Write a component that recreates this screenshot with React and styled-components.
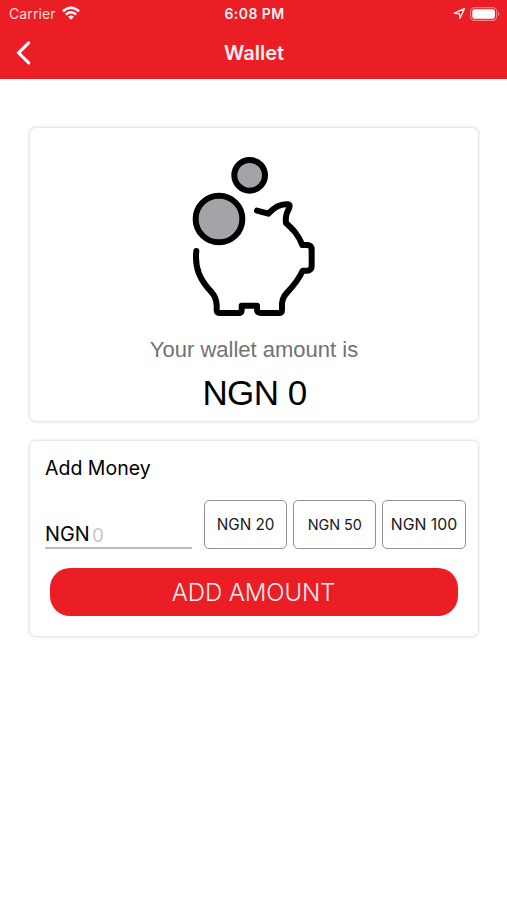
import React from "react";
import styled, { createGlobalStyle } from "styled-components";

const RED = "#eb1d25";

const GlobalStyle = createGlobalStyle`
  *, *::before, *::after { box-sizing: border-box; }
  body { margin: 0; background: #fff; }
  button, input { font: inherit; }
`;

const Screen = styled.div`
  width: 507px;
  height: 900px;
  overflow: hidden;
  background: #fff;
  color: #000;
  font-family: Inter, "Liberation Sans", sans-serif;
`;

const Header = styled.header`
  height: 79px;
  background: ${RED};
  color: #fff;
`;

const StatusBar = styled.div`
  display: grid;
  grid-template-columns: 1fr auto 1fr;
  align-items: center;
  height: 27px;
  padding: 0 7px 0 9px;
`;

const Carrier = styled.div`
  display: flex;
  align-items: center;
  gap: 6px;
  font-size: 14px;
  letter-spacing: 0.12px;
  color: #ffdcdd;
`;

const Clock = styled.div`
  font-size: 14px;
  font-weight: 600;
  letter-spacing: 0.45px;
  color: #fff0f0;
`;

const StatusIcons = styled.div`
  display: flex;
  justify-content: flex-end;
  align-items: center;
  gap: 4px;
`;

const NavBar = styled.div`
  display: grid;
  grid-template-columns: 1fr auto 1fr;
  align-items: center;
  height: 51px;
  padding: 0 14px 0 15px;
`;

const BackButton = styled.button`
  display: flex;
  width: 18px;
  padding: 0;
  border: 0;
  background: none;
`;

const Title = styled.h1`
  margin: 0;
  font-size: 20px;
  font-weight: 600;
  letter-spacing: 0;
  color: #fff0f0;
`;

const Content = styled.main`
  display: flex;
  flex-direction: column;
  gap: 18px;
  padding: 48px 28px 0 29px;
`;

const Card = styled.section`
  height: ${(p) => p.$height}px;
  border: 1px solid #e8e8e8;
  border-radius: 7px;
  background: #fff;
  box-shadow: 0 0 3px rgba(0, 0, 0, 0.13);
`;

const BalanceCard = styled(Card)`
  display: flex;
  flex-direction: column;
  align-items: center;
  padding: 17px 0 0 1px;
  font-family: "Liberation Sans", Arial, sans-serif;
`;

const Caption = styled.p`
  margin: 6px 0 0 -1px;
  font-size: 22px;
  line-height: 28px;
  color: #727272;
`;

const Balance = styled.p`
  margin: 0;
  margin-top: 9px;
  font-size: 35px;
  line-height: 40px;
  letter-spacing: -0.55px;
`;

const MoneyCard = styled(Card)`
  padding: 0 12px 0 15px;
`;

const CardTitle = styled.h2`
  margin: 0;
  padding-top: 14px;
  font-size: 19.5px;
  font-weight: 400;
  line-height: 26px;
`;

const AmountRow = styled.div`
  display: flex;
  align-items: flex-end;
  gap: 12px;
  height: 49px;
  margin-top: 18.5px;
`;

const AmountField = styled.label`
  display: flex;
  align-items: center;
  gap: 3px;
  width: 147px;
  height: 27px;
  border-bottom: 2px solid #bcbcbc;
  font-size: 19.8px;
`;

const AmountInput = styled.input`
  width: 90px;
  height: 24px;
  margin-top: 2px;
  padding: 0;
  border: 0;
  outline: 0;
  background: none;
  font-family: "Liberation Sans", Arial, sans-serif;
  &::placeholder { color: #c8c8c8; opacity: 1; }
`;

const Presets = styled.div`
  display: flex;
  gap: 6px;
`;

const Preset = styled.button`
  width: 83.2px;
  height: 49px;
  padding: 0;
  border: 1px solid #929292;
  border-radius: 5px;
  background: #fff;
  color: #171717;
  font-size: ${(p) => p.$size}px;
  white-space: nowrap;
`;

const AddButton = styled.button`
  display: block;
  width: 408px;
  height: 48px;
  margin: 19.5px 0 0 5px;
  padding: 0 1px 0 0;
  border: 0;
  border-radius: 20px;
  background: ${RED};
  color: #fff0f0;
  font-size: 24px;
  font-weight: 300;
  letter-spacing: -0.1px;
`;

const PiggyBank = () => (
  <svg width="170" height="185" viewBox="0 0 510 555" fill="none" stroke="#000" strokeWidth="18" strokeLinecap="round" strokeLinejoin="round">
    <circle cx="239" cy="91" r="46" fill="#a3a4a8" />
    <circle cx="147" cy="222" r="70" fill="#a3a4a8" />
    <path d="M261 197 L295 206 C309 191 331 176 353 178 C366 180 354 194 350 206 Q346 220 348 234 C370 254 384 268 397 300 H413 Q425 301 425 314 V363 Q425 376 412 377 H398 C388 400 370 423 351 443 Q337 458 336 477 V494 Q336 504 326 504 H273 Q262 504 261 495 V482 H215 V494 Q215 504 205 504 H151 Q140 504 140 494 V480 Q139 458 126 443 C91 406 73 371 79 318" />
  </svg>
);

const Wifi = () => (
  <svg width="18" height="15" viewBox="0 0 19 15" fill="none" stroke="#fff" strokeWidth="2.6">
    <path d="M1 5.1 Q9.5 -2.2 18 5.1 M4 8.5 Q9.5 3.8 15 8.5" />
    <path d="M6.4 11 Q9.5 8.3 12.6 11 L9.5 14.1 Z" fill="#fff" stroke="none" />
  </svg>
);

const LocationArrow = () => (
  <svg width="13" height="13" viewBox="0 0 13 13" fill="none" stroke="#ffe3e4" strokeWidth="1.5" strokeLinejoin="round">
    <path d="M1.3 6.3 L11.5 1.5 L7 11.3 L6.4 6.8 Z" />
  </svg>
);

const Battery = () => (
  <svg width="30" height="14" viewBox="0 0 30 14" fill="none">
    <rect x="0.6" y="0.6" width="26" height="12.8" rx="3.8" stroke="#f58287" strokeWidth="1.1" />
    <rect x="2.3" y="2.3" width="22.6" height="9.4" rx="2.2" fill="#fff" />
    <path d="M28 4.8 Q30.4 7 28 9.2 Z" fill="#f58287" />
  </svg>
);

const presets = [
  { label: "NGN 20", size: 15.3 },
  { label: "NGN 50", size: 14.4 },
  { label: "NGN 100", size: 15.8 },
];

export default function App() {
  return (
    <Screen>
      <GlobalStyle />
      <Header>
        <StatusBar>
          <Carrier>Carrier <Wifi /></Carrier>
          <Clock>6:08 PM</Clock>
          <StatusIcons><LocationArrow /><Battery /></StatusIcons>
        </StatusBar>
        <NavBar>
          <BackButton aria-label="Back">
            <svg width="18" height="26" viewBox="0 0 18 26" fill="none" stroke="#fff" strokeWidth="3.1" strokeLinecap="round">
              <path d="M13.7 2.8 L3.6 12.8 L13.7 22.8" />
            </svg>
          </BackButton>
          <Title>Wallet</Title>
        </NavBar>
      </Header>
      <Content>
        <BalanceCard $height={295}>
          <PiggyBank />
          <Caption>Your wallet amount is</Caption>
          <Balance>NGN 0</Balance>
        </BalanceCard>
        <MoneyCard $height={197}>
          <CardTitle>Add Money</CardTitle>
          <AmountRow>
            <AmountField>NGN<AmountInput placeholder="0" /></AmountField>
            <Presets>
              {presets.map((p) => <Preset key={p.label} $size={p.size}>{p.label}</Preset>)}
            </Presets>
          </AmountRow>
          <AddButton>ADD AMOUNT</AddButton>
        </MoneyCard>
      </Content>
    </Screen>
  );
}
